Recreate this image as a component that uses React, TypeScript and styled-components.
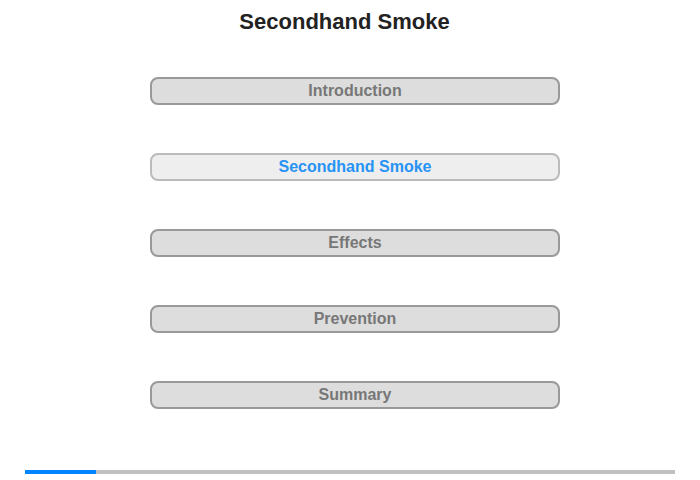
import React from "react";
import styled, { createGlobalStyle } from "styled-components";

const GlobalStyle = createGlobalStyle`
  html, body {
    margin: 0;
    padding: 0;
    background: #ffffff;
    font-family: "Liberation Sans", Arial, sans-serif;
  }
`;

const Page = styled.div`
  width: 700px;
  height: 480px;
  display: flex;
  flex-direction: column;
  align-items: center;
  box-sizing: border-box;
  padding-top: 9px;
`;

const Title = styled.h1`
  margin: 0 11px 0 0;
  font-size: 22px;
  line-height: 26px;
  font-weight: bold;
  color: #222222;
`;

const Menu = styled.div`
  display: flex;
  flex-direction: column;
  gap: 48px;
  margin-top: 42px;
  margin-left: 10px;
`;

const MenuButton = styled.div<{ $active?: boolean }>`
  width: 410px;
  height: 28px;
  box-sizing: border-box;
  border: 2px solid ${(p) => (p.$active ? "#bbbbbb" : "#999999")};
  border-radius: 8px;
  background: ${(p) => (p.$active ? "#eeeeee" : "#dddddd")};
  color: ${(p) => (p.$active ? "#2793f4" : "#777777")};
  font-size: 16px;
  font-weight: bold;
  display: flex;
  align-items: center;
  justify-content: center;
  cursor: pointer;
`;

const Progress = styled.div`
  margin-top: auto;
  margin-bottom: 6px;
  width: 650px;
  height: 4px;
  background: #c0c0c0;
  display: flex;
`;

const ProgressFill = styled.div`
  height: 100%;
  background: #0084ff;
`;

const items = ["Introduction", "Secondhand Smoke", "Effects", "Prevention", "Summary"];

const App = () => {
  const current = 1;
  return (
    <Page>
      <GlobalStyle />
      <Title>Secondhand Smoke</Title>
      <Menu>
        {items.map((item, i) => (
          <MenuButton key={item} $active={i === current}>
            {item}
          </MenuButton>
        ))}
      </Menu>
      <Progress>
        <ProgressFill style={{ width: `${(71 / 650) * 100}%` }} />
      </Progress>
    </Page>
  );
};

export default App;
